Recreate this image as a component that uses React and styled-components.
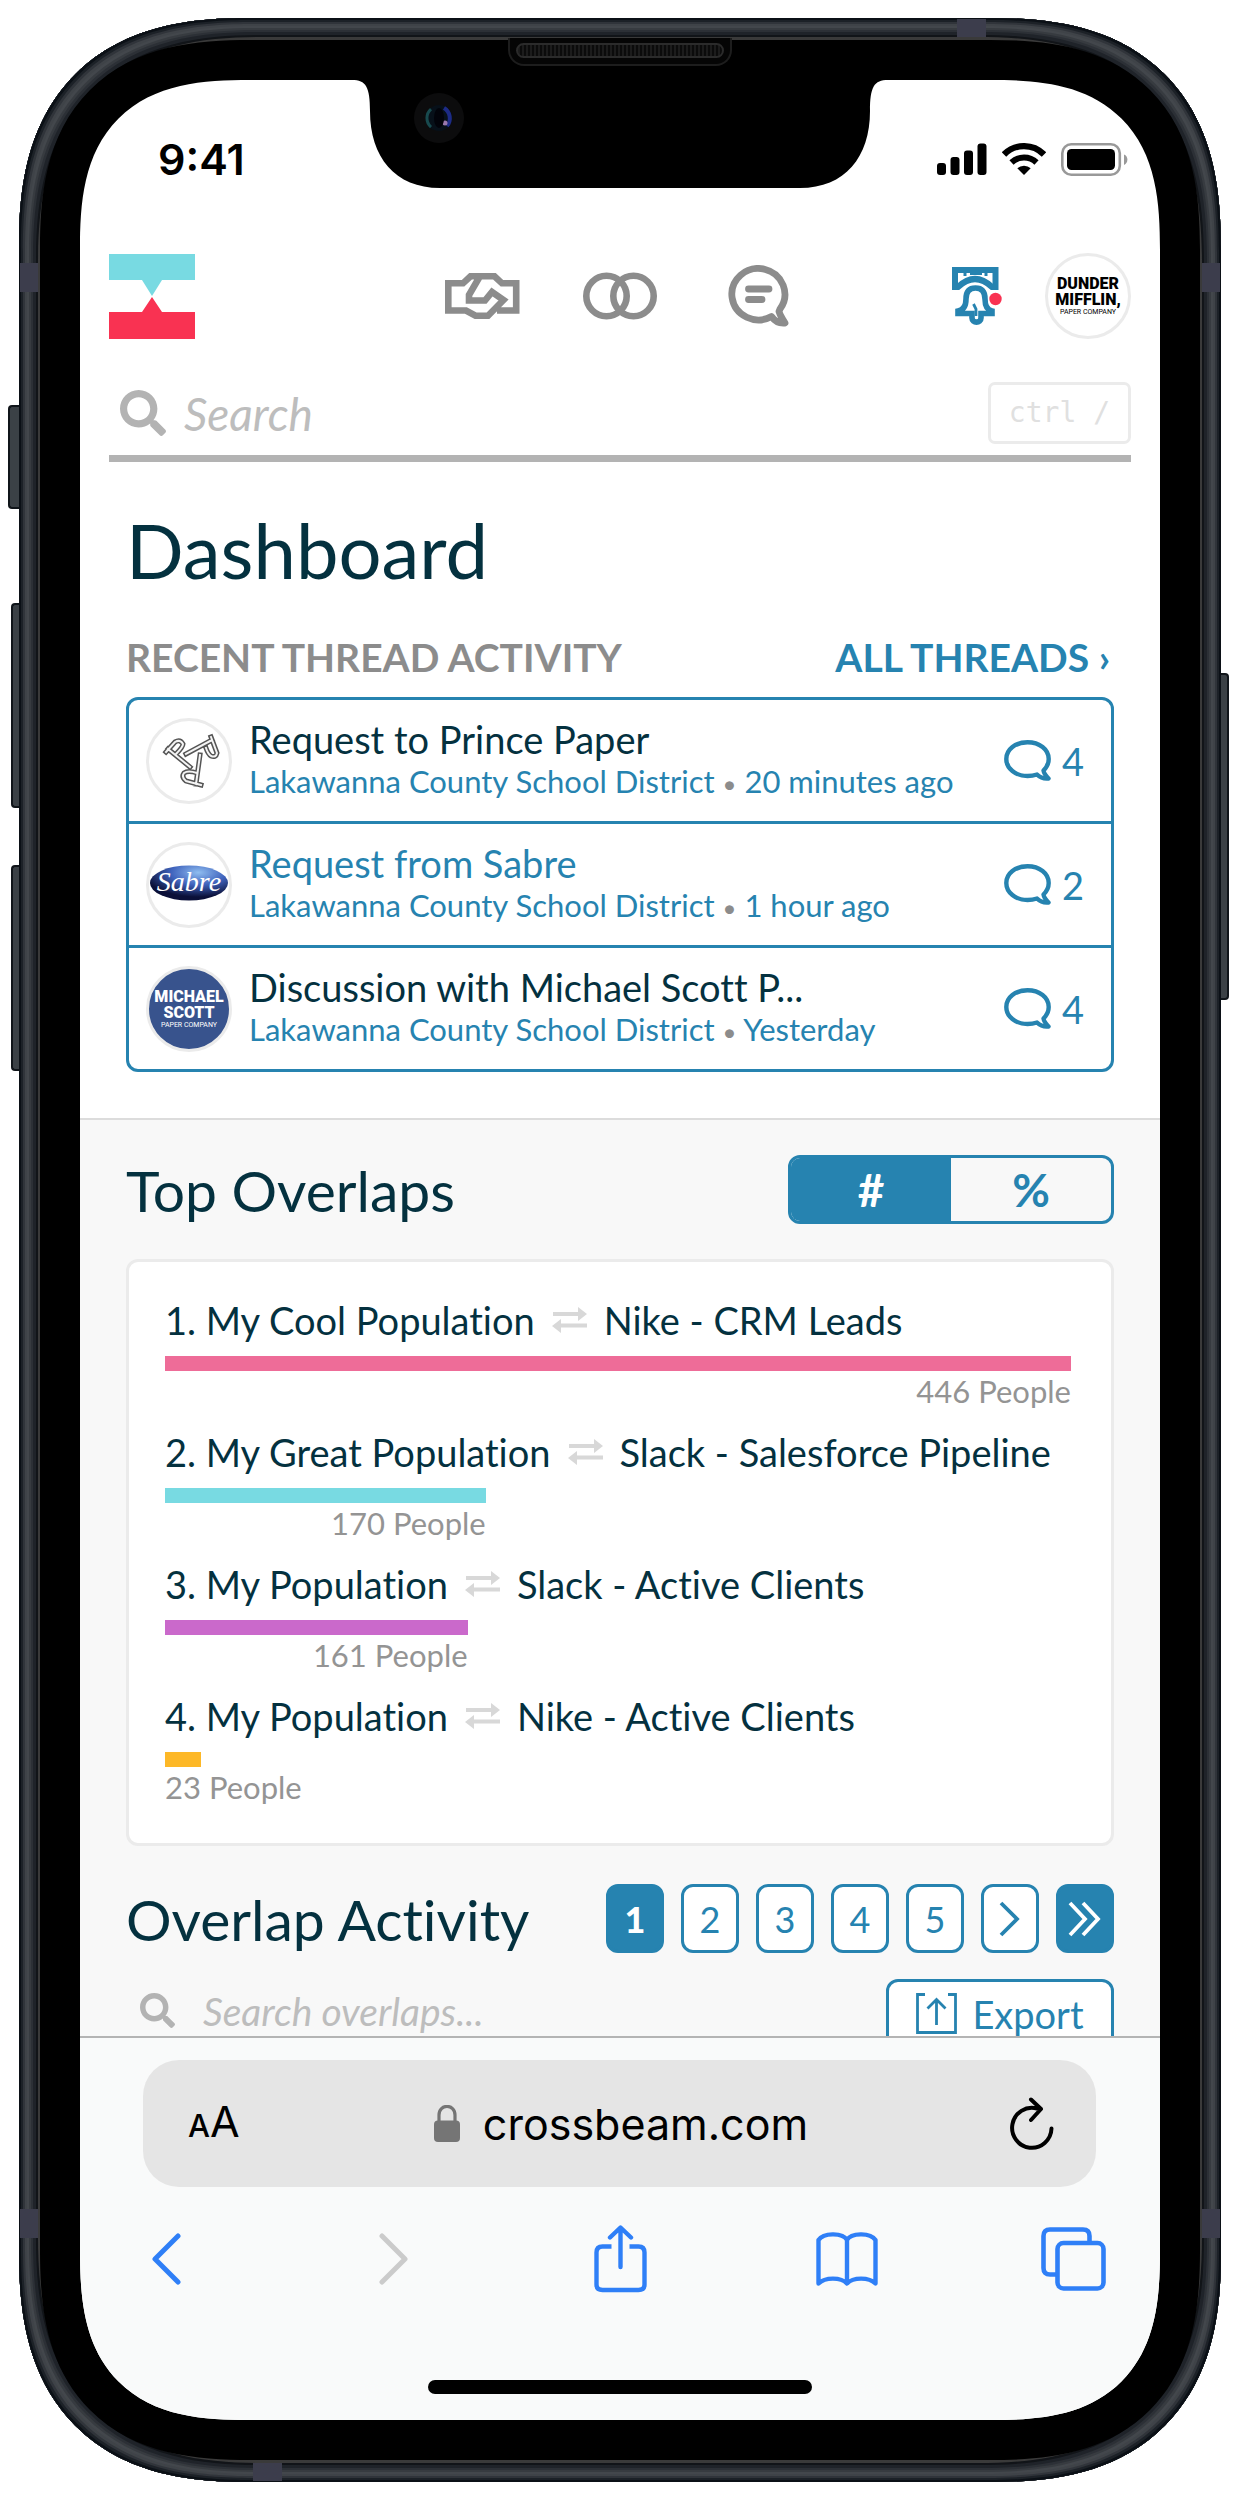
import React, { useState } from 'react';
import styled, { createGlobalStyle, css } from 'styled-components';
import { FaSearch } from 'react-icons/fa';

const color = {
  ink: '#04313f',
  blue: '#2683b0',
  grey: '#8c8c8c',
  soft: '#b3b3b3',
  faint: '#ebebeb',
  ios: '#2f7ff7',
};
const sans = 'Lato, "Open Sans", sans-serif';
const system = 'Inter, Roboto, sans-serif';

const GlobalStyle = createGlobalStyle`
  *, *::before, *::after { box-sizing: border-box; }
  body { margin: 0; background: #fff; font-family: ${sans}; font-variant-ligatures: none; color: ${color.ink}; }
  h1, h2, h3, p, ol, ul { margin: 0; padding: 0; font-size: inherit; font-weight: 400; }
  ol, ul { list-style: none; }
  a { color: inherit; text-decoration: none; }
  button { font: inherit; color: inherit; border: 0; background: none; padding: 0; cursor: pointer; }
  svg { display: block; flex: none; }
`;

/* ---------- Device ---------- */

const Stage = styled.div`
  padding: 18px 19px 19px;
`;

const Frame = styled.div`
  position: relative;
  max-width: 1202px;
  margin: 0 auto;
  padding: 22px 21px;
  border-radius: 192px;
  background: #3a3a3a;
  box-shadow:
    inset 0 0 0 2px #0b1016,
    inset 0 0 0 4px #1c2127,
    inset 0 0 0 6px #30343a,
    inset 0 0 0 8px #3f4348,
    inset 0 0 0 10px #43474c,
    inset 0 0 0 12px #373b40,
    inset 0 0 0 14px #2c3036,
    inset 0 0 0 17px #1f2329,
    inset 0 0 0 19px #111418;
  @supports (corner-shape: superellipse(1.3)) {
    border-radius: 231px;
    corner-shape: superellipse(1.31);
  }
`;

const Bezel = styled.div`
  position: relative;
  padding: 40px;
  border-radius: 171px;
  background: #000;
  @supports (corner-shape: superellipse(1.3)) {
    border-radius: 210px;
    corner-shape: superellipse(1.35);
  }
`;

const Screen = styled.div`
  overflow: hidden;
  border-radius: 131px;
  background: #fff;
  @supports (corner-shape: superellipse(1.3)) {
    border-radius: 170px;
    corner-shape: superellipse(1.43);
  }
`;

const SideButton = styled.span`
  position: absolute;
  top: ${p => p.$top}px;
  ${p => p.$side}: -${p => p.$depth}px;
  width: ${p => p.$depth}px;
  height: ${p => p.$length}px;
  border: 2px solid #10151a;
  border-${p => (p.$side === 'left' ? 'right' : 'left')}: 0;
  border-radius: ${p => (p.$side === 'left' ? '4px 0 0 4px' : '0 4px 4px 0')};
  background: #3b4146;
`;

const Band = styled.span`
  position: absolute;
  background: #3c3d4c;
  ${p => p.$edge}: 1px;
  ${p => p.$from}: ${p => p.$at}px;
  width: ${p => (p.$from === 'top' ? 18 : 29)}px;
  height: ${p => (p.$from === 'top' ? 29 : 18)}px;
`;

const Earpiece = styled.span`
  position: absolute;
  top: -2px;
  left: 50%;
  width: 224px;
  height: 28px;
  margin-left: -112px;
  border: 2px solid #1d1d1d;
  border-top: 0;
  border-radius: 0 0 16px 16px;
  background: #050505;
  &::after {
    content: '';
    position: absolute;
    inset: 5px 6px 6px;
    border: 2px solid #2b2b2b;
    border-radius: 9px;
    background: repeating-linear-gradient(90deg, #1c1c1c 0 2px, #0b0b0b 2px 4px);
  }
`;

const Notch = styled.svg`
  position: absolute;
  top: 39px;
  left: 50%;
  margin-left: -268px;
`;

/* ---------- Status bar ---------- */

const StatusBar = styled.div`
  display: flex;
  align-items: center;
  justify-content: space-between;
  height: 158px;
  padding: 0 32px 0 78px;
  color: #000;
`;

const Clock = styled.time`
  font: 600 43px/50px ${system};
`;

const StatusIcons = styled.div`
  display: flex;
  align-items: center;
  gap: 15px;
`;

/* ---------- Site header ---------- */

const Header = styled.header`
  padding: 15px 29px 0;
`;

const TopRow = styled.div`
  display: grid;
  grid-template-columns: 1fr auto 1fr;
  align-items: center;
  height: 86px;
`;

const Nav = styled.nav`
  display: flex;
  gap: 62px;
  color: ${color.grey};
`;

const NavLink = styled.a`
  display: flex;
  align-items: center;
  justify-content: center;
  width: 76px;
  height: 62px;
`;

const Account = styled.div`
  display: flex;
  align-items: center;
  justify-content: flex-end;
  gap: 43px;
`;

const Avatar = styled.span`
  display: flex;
  flex: none;
  flex-direction: column;
  align-items: center;
  justify-content: center;
  width: 86px;
  height: 86px;
  overflow: hidden;
  border: 3px solid ${color.faint};
  border-radius: 50%;
  background: ${p => (p.$filled ? '#38538d' : '#fff')};
  color: ${p => (p.$filled ? '#fff' : '#000')};
`;

const Wordmark = styled.span`
  font: 900 16px/16px Roboto, sans-serif;
`;

const Tagline = styled.span`
  font: 400 7px/8px Roboto, sans-serif;
`;

const SearchBar = styled.form`
  display: flex;
  align-items: center;
  gap: 18px;
  margin-top: 43px;
  padding: 0 0 11px 11px;
  border-bottom: 7px solid ${color.soft};
  color: ${color.soft};
`;

const searchText = css`
  flex: 1;
  min-width: 0;
  padding: 0;
  border: 0;
  outline: 0;
  background: none;
  color: ${color.ink};
  font-family: ${sans};
  font-style: italic;
  &::placeholder { color: #bdbdbd; opacity: 1; }
`;

const SearchInput = styled.input`
  ${searchText}
  height: 62px;
  font-size: 46px;
`;

const Kbd = styled.kbd`
  padding: 0 18px;
  border: 3px solid ${color.faint};
  border-radius: 7px;
  color: #e0e0e0;
  font: 28px/56px "DejaVu Sans Mono", monospace;
  white-space: pre;
`;

/* ---------- Threads ---------- */

const Threads = styled.section`
  padding: 44px 46px 46px;
`;

const PageTitle = styled.h1`
  font-size: 76px;
  line-height: 88px;
`;

const LabelRow = styled.div`
  display: flex;
  justify-content: space-between;
  margin: 41px 0 18px;
  padding-right: 4px;
  font-size: 39px;
  font-weight: 700;
  line-height: 44px;
`;

const Label = styled.h2`
  color: ${color.grey};
  font-weight: 700;
`;

const AllLink = styled.a`
  color: ${color.blue};
`;

const ThreadList = styled.ul`
  border: 3px solid ${color.blue};
  border-radius: 12px;
`;

const Thread = styled.li`
  & + & { border-top: 3px solid ${color.blue}; }
`;

const ThreadLink = styled.a`
  display: flex;
  align-items: center;
  height: 121px;
  padding: 0 27px 0 17px;
  gap: 17px;
`;

const ThreadBody = styled.span`
  flex: 1;
  min-width: 0;
  white-space: nowrap;
`;

const ThreadTitle = styled.span`
  display: block;
  color: ${p => (p.$active ? color.blue : color.ink)};
  font-size: 38px;
  line-height: 44px;
`;

const ThreadMeta = styled.span`
  display: block;
  color: ${color.blue};
  font-size: 31px;
  line-height: 40px;
`;

const Dot = styled.span`
  color: ${color.grey};
  font-size: 24px;
`;

const Replies = styled.span`
  display: flex;
  align-items: center;
  gap: 11px;
  color: ${color.blue};
  font-size: 38px;
  line-height: 44px;
`;

/* ---------- Overlaps ---------- */

const Overlaps = styled.section`
  padding: 35px 46px 0;
  border-top: 2px solid #dcdcdc;
  background: #f8f8f8;
`;

const SectionHead = styled.div`
  display: flex;
  align-items: center;
  justify-content: space-between;
  height: 69px;
`;

const SectionTitle = styled.h2`
  font-size: 57px;
  line-height: 68px;
`;

const Toggle = styled.div`
  display: flex;
  width: 326px;
  height: 69px;
  overflow: hidden;
  border: 3px solid ${color.blue};
  border-radius: 12px;
`;

const ToggleButton = styled.button`
  flex: 1;
  background: ${p => (p.$on ? color.blue : 'transparent')};
  color: ${p => (p.$on ? '#fff' : color.blue)};
  font-size: 46px;
  font-weight: 700;
  line-height: 60px;
`;

const Card = styled.ol`
  display: grid;
  gap: 21px;
  margin: 35px 0 38px;
  padding: 36px 40px 38px 36px;
  border: 3px solid ${color.faint};
  border-radius: 12px;
  background: #fff;
`;

const OverlapTitle = styled.h3`
  display: flex;
  align-items: center;
  gap: 17px;
  font-size: 38px;
  line-height: 44px;
  white-space: pre;
`;

const Bar = styled.div`
  height: 15px;
  margin: 14px 0 2px;
`;

const Count = styled.p`
  min-width: max-content;
  color: #949494;
  font-size: 31px;
  line-height: 36px;
  text-align: right;
`;

const Pager = styled.nav`
  display: flex;
  gap: 17px;
`;

const PageButton = styled.button`
  display: flex;
  align-items: center;
  justify-content: center;
  width: 58px;
  height: 69px;
  border: 3px solid ${color.blue};
  border-radius: 12px;
  background: ${p => (p.$on ? color.blue : '#fff')};
  color: ${p => (p.$on ? '#fff' : color.blue)};
  font-size: 36px;
  font-weight: ${p => (p.$on ? 900 : 400)};
  line-height: 44px;
`;

const FilterRow = styled.div`
  display: flex;
  align-items: flex-start;
  justify-content: space-between;
  height: 57px;
  margin-top: 26px;
  overflow: hidden;
`;

const Filter = styled.form`
  display: flex;
  flex: 1;
  align-items: center;
  gap: 28px;
  height: 63px;
  padding-left: 14px;
  color: ${color.soft};
`;

const FilterInput = styled.input`
  ${searchText}
  font-size: 39px;
`;

const ExportButton = styled.button`
  display: flex;
  align-items: center;
  justify-content: center;
  gap: 15px;
  width: 228px;
  height: 69px;
  border: 3px solid ${color.blue};
  border-radius: 12px;
  background: #fff;
  color: ${color.blue};
  font-size: 38px;
  line-height: 44px;
`;

/* ---------- Browser chrome ---------- */

const Browser = styled.footer`
  padding: 22px 0 26px;
  border-top: 2px solid #b4b4b4;
  background: #f9fafa;
`;

const AddressBar = styled.div`
  display: grid;
  grid-template-columns: 1fr auto 1fr;
  align-items: center;
  height: 127px;
  margin: 0 64px 0 63px;
  padding: 0 42px 0 45px;
  border-radius: 36px;
  background: #e5e5e5;
  color: #000;
`;

const TextSize = styled.button`
  justify-self: start;
  font: 400 43px/50px ${system};
`;

const SmallA = styled.span`
  font-size: 31px;
  font-weight: 500;
`;

const Address = styled.span`
  display: flex;
  align-items: center;
  gap: 23px;
  font: 400 43px/54px ${system};
`;

const Reload = styled.button`
  justify-self: end;
`;

const Tools = styled.div`
  display: flex;
  justify-content: space-between;
  margin: 38px 54px 87px;
  color: ${color.ios};
`;

const Tool = styled.button`
  display: flex;
  align-items: center;
  justify-content: center;
  width: 65px;
  height: 68px;
  color: ${p => (p.disabled ? '#cbcbcb' : color.ios)};
`;

const HomeBar = styled.div`
  width: 384px;
  height: 14px;
  margin: 0 auto;
  border-radius: 7px;
  background: #000;
`;

/* ---------- Drawings ---------- */

const Logo = () => (
  <svg width="86" height="85" viewBox="0 0 86 85" role="img" aria-label="Crossbeam">
    <path fill="#78dae2" d="M0 0h86v26H53L43 42 33 26H0z" />
    <path fill="#f93252" d="M0 85h86V58H53L43 43 33 58H0z" />
  </svg>
);

const Handshake = () => (
  <svg width="75" height="46" viewBox="0 0 75 46" fill="none" stroke="currentColor" strokeWidth="6.6">
    <path d="M71.2 37.5H52M71.2 40.8V10.3H57L49.500 3.300H25.500L18 10.300H3.300V37.500H21L30.500 42.700H43L58.500 27 47 19 40 27.500H24V22L34.500 4" />
  </svg>
);

const Rings = () => (
  <svg width="74" height="48" viewBox="0 0 74 48" fill="none" stroke="currentColor" strokeWidth="6.6">
    <circle cx="23.500" cy="24" r="20.200" />
    <circle cx="50.500" cy="24" r="20.200" />
  </svg>
);

const Chat = () => (
  <svg width="61" height="62" viewBox="0 0 61 62" fill="none" stroke="currentColor" strokeWidth="6.8" strokeLinejoin="round" strokeLinecap="round">
    <path d="M43.500 51.500A26.500 25.700 0 1 1 52 44L51 46.500C52 51 55 54 57 58 52 58.500 47 56.500 43.500 51.500z" />
    <path d="M20.500 24H41M20.500 34.500H34" />
  </svg>
);

const Bell = () => (
  <svg width="50" height="58" viewBox="0 0 50 58" fill="none" stroke={color.blue} strokeWidth="6">
    <path d="M3 23V3H43.500V23" />
    <path d="M3 20H6Q23 4 40 20H43" />
    <path strokeWidth="3" d="M13 4V9M18 6.500H30M34 4V9" />
    <path strokeWidth="5.600" d="M6 44C12 43 14 38 14 32 14 25 17 21 23.500 21S33 25 33 32C33 38 35 43 40 44V46.500H29V51C29 56.500 20 56.500 20 51V46.500H6Z" />
    <path strokeWidth="2.800" d="M21.500 37 24 42V49" />
    <circle cx="43.500" cy="32" r="6.200" fill="#f93252" stroke="none" />
  </svg>
);

const Bubble = () => (
  <svg width="47" height="41" viewBox="0 0 47 41" fill="none" stroke="currentColor" strokeWidth="4.400" strokeLinejoin="round">
    <path d="M33 34.500C30 35.500 27 36 23.500 36 11.500 36 2.300 28.500 2.300 19S11.500 2.300 23.500 2.300 44.700 9.500 44.700 19C44.700 23.500 42.500 27.500 39.500 30.500 40 34 42 36 44.500 38.500 40 39 36 37.500 33 34.500z" />
  </svg>
);

const Swap = () => (
  <svg width="35" height="26" viewBox="0 0 35 26" fill="none" stroke="#d8d8d8" strokeWidth="4" aria-hidden="true">
    <path d="M1 7H27M8 18.500H35" />
    <path fill="#d8d8d8" stroke="none" d="M26 0 35 7 26 14zM9 12 0 19 9 26z" />
  </svg>
);

const Hooks = () => {
  const shapes = 'M44 49 22 31M20 34 29 24Q34 21 37 26 37 29 30 36M40 36 66 22M65 19 71 35Q70 40 65 38 62 36 60 30M54 37 50 66M55 67 40 63Q35 59 38 55 42 52 51 55';
  return (
    <svg width="80" height="80" viewBox="3 3 80 80" fill="none" strokeLinecap="square">
      <path d={shapes} stroke="#555" strokeWidth="5" />
      <path d={shapes} stroke="#f4f4f4" strokeWidth="2" />
    </svg>
  );
};

const Sabre = () => (
  <svg width="80" height="80" viewBox="0 0 80 80">
    <defs>
      <radialGradient id="sabre" cx=".62" cy=".2" r=".7">
        <stop offset="0" stopColor="#8fbdf0" />
        <stop offset=".5" stopColor="#3f63bd" />
        <stop offset="1" stopColor="#0b1038" />
      </radialGradient>
    </defs>
    <ellipse cx="40" cy="38" rx="39" ry="17.500" fill="url(#sabre)" />
    <text x="40" y="46" textAnchor="middle" fill="#fff" fontFamily="Liberation Serif, serif" fontStyle="italic" fontSize="28">Sabre</text>
  </svg>
);

const Chevron = ({ twice }) => (
  <svg width="34" height="36" viewBox="0 0 34 36" fill="none" stroke="currentColor" strokeWidth="3.800">
    {twice ? <path d="M2 2 17 18 2 34M15 2 30 18 15 34" /> : <path d="M8 2 24 18 8 34" />}
  </svg>
);

const ExportIcon = () => (
  <svg width="41" height="41" viewBox="0 0 41 41" fill="none" stroke="currentColor" strokeWidth="2.800">
    <path d="M9 1.500H1.500V39.500H39.500V1.500H32M20.500 32V7M11.500 15.500 20.500 6.500 29.500 15.500" />
  </svg>
);

const Signal = () => (
  <svg width="50" height="32" viewBox="0 0 50 32" fill="currentColor">
    <rect x="0" y="20" width="9" height="12" rx="3" />
    <rect x="13.500" y="14" width="9" height="18" rx="3" />
    <rect x="27" y="7.500" width="9" height="24.500" rx="3" />
    <rect x="40.500" y="0.500" width="9" height="31.500" rx="3" />
  </svg>
);

const Wifi = () => (
  <svg width="44" height="32" viewBox="0 0 44 32" fill="none" stroke="currentColor">
    <path strokeWidth="6.200" d="M2 11.500A28 28 0 0 1 42 11.500" />
    <path strokeWidth="6" d="M9.500 19.500A18 18 0 0 1 34.500 19.500" />
    <path fill="currentColor" stroke="none" d="M22 32 15.300 25.300A10 10 0 0 1 28.700 25.300z" />
  </svg>
);

const Battery = () => (
  <svg width="67" height="33" viewBox="0 0 67 33">
    <rect x="1.300" y="1.300" width="57.500" height="30.400" rx="9" fill="none" stroke="#999" strokeWidth="2.600" />
    <rect x="6" y="6" width="48" height="21" rx="4.500" />
    <path fill="#999" d="M63 11.500C67.500 13 67.500 20 63 22z" />
  </svg>
);

const Lock = () => (
  <svg width="26" height="37" viewBox="0 0 26 37">
    <rect y="15.500" width="26" height="21.500" rx="4" fill="#757575" />
    <path d="M5 17V10C5 -1.500 21 -1.500 21 10V17" fill="none" stroke="#757575" strokeWidth="3.200" />
  </svg>
);

const ReloadIcon = () => (
  <svg width="44" height="53" viewBox="0 0 44 53" fill="none" stroke="currentColor" strokeWidth="4" strokeLinecap="round" strokeLinejoin="round">
    <path d="M41.500 31.500A19.700 20 0 1 1 27 11.500L31 12M21 2.500 31 12 21 23" />
  </svg>
);

const Arrow = ({ back }) => (
  <svg width="29" height="52" viewBox="0 0 29 52" fill="none" stroke="currentColor" strokeWidth="5" strokeLinecap="round" strokeLinejoin="round">
    <path d={back ? 'M26 3 3 26 26 49' : 'M3 3 26 26 3 49'} />
  </svg>
);

const Share = () => (
  <svg width="53" height="68" viewBox="0 0 53 68" fill="none" stroke="currentColor" strokeWidth="4.400" strokeLinecap="round" strokeLinejoin="round">
    <path strokeLinecap="butt" d="M17.500 21.500H8.500Q2.500 21.500 2.500 27.500V59.500Q2.500 65 8.500 65H44.500Q50.500 65 50.500 59.500V27.500Q50.500 21.500 44.500 21.500H35.500" />
    <path d="M26.500 42V3M16 12.500 26.500 2.500 37 12.500" />
  </svg>
);

const Book = () => (
  <svg width="62" height="54" viewBox="0 0 62 54" fill="none" stroke="currentColor" strokeWidth="4.400" strokeLinejoin="round">
    <path d="M31 8V51.500M31 8C27 1 8 0 2.500 8V51.500C9 45 25 45 31 51.500 37 45 53 45 59.500 51.500V8C54 0 35 1 31 8z" />
  </svg>
);

const Tabs = () => (
  <svg width="65" height="64" viewBox="0 0 65 64" fill="none" stroke="currentColor" strokeWidth="4.600" strokeLinejoin="round">
    <path d="M16.500 47.500H9Q2.500 47.500 2.500 41V9Q2.500 2.500 9 2.500H42Q48.500 2.500 48.500 9V16" />
    <rect x="16.500" y="16" width="46" height="45.500" rx="6" />
  </svg>
);

const NotchShape = () => (
  <Notch width="536" height="110" viewBox="0 0 536 110" aria-hidden="true">
    <path d="M0 0H536V1C522 1 518 8 518 32C518 78 493 109 448 109H88C43 109 18 78 18 32C18 8 14 1 0 1z" />
    <circle cx="87" cy="39" r="25" fill="#0c0c0d" />
    <circle cx="87" cy="39" r="13" fill="#071019" />
    <path d="M79 30A12 12 0 0 0 79 48" fill="none" stroke="#184a4e" strokeWidth="3" />
    <path d="M92 29A12 12 0 0 1 95 47" fill="none" stroke="#1d2b86" strokeWidth="4" />
    <circle cx="93" cy="44" r="2.500" fill="#9a78ac" />
    <ellipse cx="87" cy="39" rx="5" ry="10" fill="#02030a" />
  </Notch>
);

/* ---------- Data ---------- */

const threads = [
  { title: 'Request to Prince Paper', when: '20 minutes ago', replies: 4, logo: <Avatar><Hooks /></Avatar> },
  { title: 'Request from Sabre', when: '1 hour ago', replies: 2, active: true, logo: <Avatar><Sabre /></Avatar> },
  {
    title: 'Discussion with Michael Scott P...',
    when: 'Yesterday',
    replies: 4,
    logo: (
      <Avatar $filled>
        <Wordmark>MICHAEL</Wordmark>
        <Wordmark>SCOTT</Wordmark>
        <Tagline>PAPER COMPANY</Tagline>
      </Avatar>
    ),
  },
];

const overlaps = [
  { mine: 'My Cool Population', theirs: 'Nike - CRM Leads', people: 446, width: 100, fill: '#ee6c98' },
  { mine: 'My Great Population', theirs: 'Slack - Salesforce Pipeline', people: 170, width: 35.4, fill: '#78dae2' },
  { mine: 'My Population', theirs: 'Slack - Active Clients', people: 161, width: 33.4, fill: '#ca69cb' },
  { mine: 'My Population', theirs: 'Nike - Active Clients', people: 23, width: 4, fill: '#fdb827' },
];

export default function App() {
  const [unit, setUnit] = useState('#');
  const [page, setPage] = useState(1);
  const stop = e => e.preventDefault();

  return (
    <Stage>
      <GlobalStyle />
      <Frame>
        <SideButton $side="left" $top={387} $length={104} $depth={11} />
        <SideButton $side="left" $top={585} $length={205} $depth={8} />
        <SideButton $side="left" $top={847} $length={206} $depth={8} />
        <SideButton $side="right" $top={655} $length={327} $depth={8} />
        <Band $edge="top" $from="right" $at={235} />
        <Band $edge="bottom" $from="left" $at={234} />
        <Band $edge="left" $from="top" $at={245} />
        <Band $edge="right" $from="top" $at={245} />
        <Band $edge="left" $from="top" $at={2191} />
        <Band $edge="right" $from="top" $at={2191} />
        <Bezel>
          <Earpiece />
          <Screen>
            <StatusBar>
              <Clock>9:41</Clock>
              <StatusIcons>
                <Signal />
                <Wifi />
                <Battery />
              </StatusIcons>
            </StatusBar>

            <Header>
              <TopRow>
                <a href="#home"><Logo /></a>
                <Nav aria-label="Main">
                  <NavLink href="#partners" aria-label="Partners"><Handshake /></NavLink>
                  <NavLink href="#overlaps" aria-label="Overlaps"><Rings /></NavLink>
                  <NavLink href="#threads" aria-label="Threads"><Chat /></NavLink>
                </Nav>
                <Account>
                  <button type="button" aria-label="Notifications"><Bell /></button>
                  <Avatar>
                    <Wordmark>DUNDER</Wordmark>
                    <Wordmark>MIFFLIN,</Wordmark>
                    <Tagline>PAPER COMPANY</Tagline>
                  </Avatar>
                </Account>
              </TopRow>
              <SearchBar role="search" onSubmit={stop}>
                <FaSearch size={46} aria-hidden="true" />
                <SearchInput type="text" aria-label="Search" placeholder="Search" />
                <Kbd>ctrl /</Kbd>
              </SearchBar>
            </Header>

            <main>
              <Threads>
                <PageTitle>Dashboard</PageTitle>
                <LabelRow>
                  <Label>RECENT THREAD ACTIVITY</Label>
                  <AllLink href="#threads">ALL THREADS ›</AllLink>
                </LabelRow>
                <ThreadList>
                  {threads.map(t => (
                    <Thread key={t.title}>
                      <ThreadLink href="#thread">
                        {t.logo}
                        <ThreadBody>
                          <ThreadTitle $active={t.active}>{t.title}</ThreadTitle>
                          <ThreadMeta>
                            Lakawanna County School District <Dot>•</Dot> {t.when}
                          </ThreadMeta>
                        </ThreadBody>
                        <Replies><Bubble />{t.replies}</Replies>
                      </ThreadLink>
                    </Thread>
                  ))}
                </ThreadList>
              </Threads>

              <Overlaps>
                <SectionHead>
                  <SectionTitle>Top Overlaps</SectionTitle>
                  <Toggle>
                    {['#', '%'].map(u => (
                      <ToggleButton key={u} type="button" $on={unit === u} aria-pressed={unit === u} onClick={() => setUnit(u)}>
                        {u}
                      </ToggleButton>
                    ))}
                  </Toggle>
                </SectionHead>
                <Card>
                  {overlaps.map((o, i) => (
                    <li key={o.people}>
                      <OverlapTitle>
                        <span>{i + 1}. {o.mine}</span>
                        <Swap />
                        <span>{o.theirs}</span>
                      </OverlapTitle>
                      <Bar style={{ width: `${o.width}%`, background: o.fill }} />
                      <Count style={{ width: `${o.width}%` }}>{o.people} People</Count>
                    </li>
                  ))}
                </Card>
                <SectionHead>
                  <SectionTitle>Overlap Activity</SectionTitle>
                  <Pager aria-label="Pages">
                    {[1, 2, 3, 4, 5].map(n => (
                      <PageButton key={n} type="button" $on={page === n} onClick={() => setPage(n)}>{n}</PageButton>
                    ))}
                    <PageButton type="button" aria-label="Next page"><Chevron /></PageButton>
                    <PageButton type="button" $on aria-label="Last page"><Chevron twice /></PageButton>
                  </Pager>
                </SectionHead>
                <FilterRow>
                  <Filter onSubmit={stop}>
                    <FaSearch size={35} aria-hidden="true" />
                    <FilterInput type="text" aria-label="Search overlaps" placeholder="Search overlaps..." />
                  </Filter>
                  <ExportButton type="button"><ExportIcon />Export</ExportButton>
                </FilterRow>
              </Overlaps>
            </main>

            <Browser>
              <AddressBar>
                <TextSize type="button" aria-label="Text size"><SmallA>A</SmallA>A</TextSize>
                <Address><Lock />crossbeam.com</Address>
                <Reload type="button" aria-label="Reload"><ReloadIcon /></Reload>
              </AddressBar>
              <Tools>
                <Tool type="button" aria-label="Back"><Arrow back /></Tool>
                <Tool type="button" aria-label="Forward" disabled><Arrow /></Tool>
                <Tool type="button" aria-label="Share"><Share /></Tool>
                <Tool type="button" aria-label="Bookmarks"><Book /></Tool>
                <Tool type="button" aria-label="Tabs"><Tabs /></Tool>
              </Tools>
              <HomeBar />
            </Browser>
          </Screen>
          <NotchShape />
        </Bezel>
      </Frame>
    </Stage>
  );
}
